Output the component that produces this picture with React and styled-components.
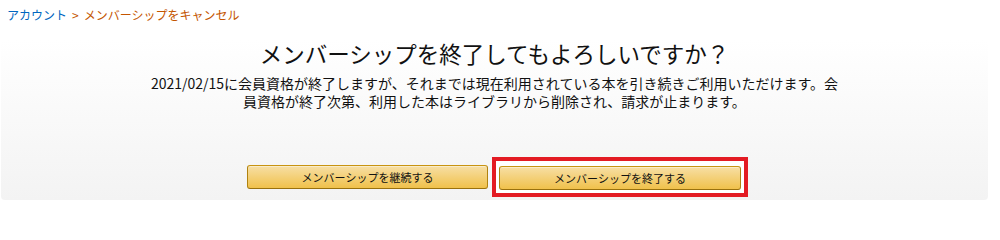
import React from "react"
import styled, { createGlobalStyle } from "styled-components"

const GlobalStyle = createGlobalStyle`
  body {
    margin: 0;
    background: #ffffff;
    font-family: Meiryo, "Noto Sans CJK JP", "Noto Sans", sans-serif;
    color: #111;
  }
`

const Page = styled.div`
  width: 1000px;
  height: 207px;
  padding-left: 1px;
  box-sizing: border-box;
`

const Panel = styled.div`
  width: 987px;
  height: 200px;
  box-sizing: border-box;
  padding: 4px 0 0 6px;
  border-radius: 0 0 4px 4px;
  background: linear-gradient(to bottom, #ffffff 20%, #f3f3f3 100%);
  display: flex;
  flex-direction: column;
`

const Breadcrumb = styled.div`
  font-size: 12px;
  line-height: 22px;
  display: flex;
  gap: 5px;
`

const Crumb = styled.span`
  color: ${props => (props.current ? "#c45500" : "#0066c0")};
`

const Body = styled.div`
  display: flex;
  flex-direction: column;
  align-items: center;
  padding-right: 6px;
`

const Title = styled.h1`
  margin: 12px 0 0;
  font-size: 22.5px;
  font-weight: 400;
  line-height: 30px;
  color: #111;
`

const Message = styled.p`
  margin: 6px 0 0;
  font-size: 14px;
  line-height: 18px;
  text-align: center;
  color: #111;
`

const Actions = styled.div`
  margin-top: 47px;
  display: flex;
  align-items: center;
  gap: 4px;
  margin-left: 6px;
`

const Highlight = styled.div`
  border: 4px solid #e31b23;
  padding: 3px;
  background: #ffffff;
`

const Button = styled.button`
  width: ${props => props.w}px;
  height: 24px;
  box-sizing: border-box;
  border: 1px solid;
  border-color: #c89411 #b0820f #99710d;
  border-radius: 3px;
  background: linear-gradient(to bottom, #f7dfa5, #f0c14b);
  box-shadow: 0 1px 0 rgba(255, 255, 255, 0.4) inset;
  font-family: inherit;
  font-size: 11px;
  color: #111;
  padding: 0;
  cursor: pointer;
`

export default function App() {
  return (
    <>
      <GlobalStyle />
      <Page>
        <Panel>
          <Breadcrumb>
            <Crumb>アカウント</Crumb>
            <Crumb current>&gt;</Crumb>
            <Crumb current>メンバーシップをキャンセル</Crumb>
          </Breadcrumb>
          <Body>
            <Title>メンバーシップを終了してもよろしいですか？</Title>
            <Message>
              2021/02/15に会員資格が終了しますが、それまでは現在利用されている本を引き続きご利用いただけます。会
              <br />
              員資格が終了次第、利用した本はライブラリから削除され、請求が止まります。
            </Message>
            <Actions>
              <Button w={241}>メンバーシップを継続する</Button>
              <Highlight>
                <Button w={242}>メンバーシップを終了する</Button>
              </Highlight>
            </Actions>
          </Body>
        </Panel>
      </Page>
    </>
  )
}
